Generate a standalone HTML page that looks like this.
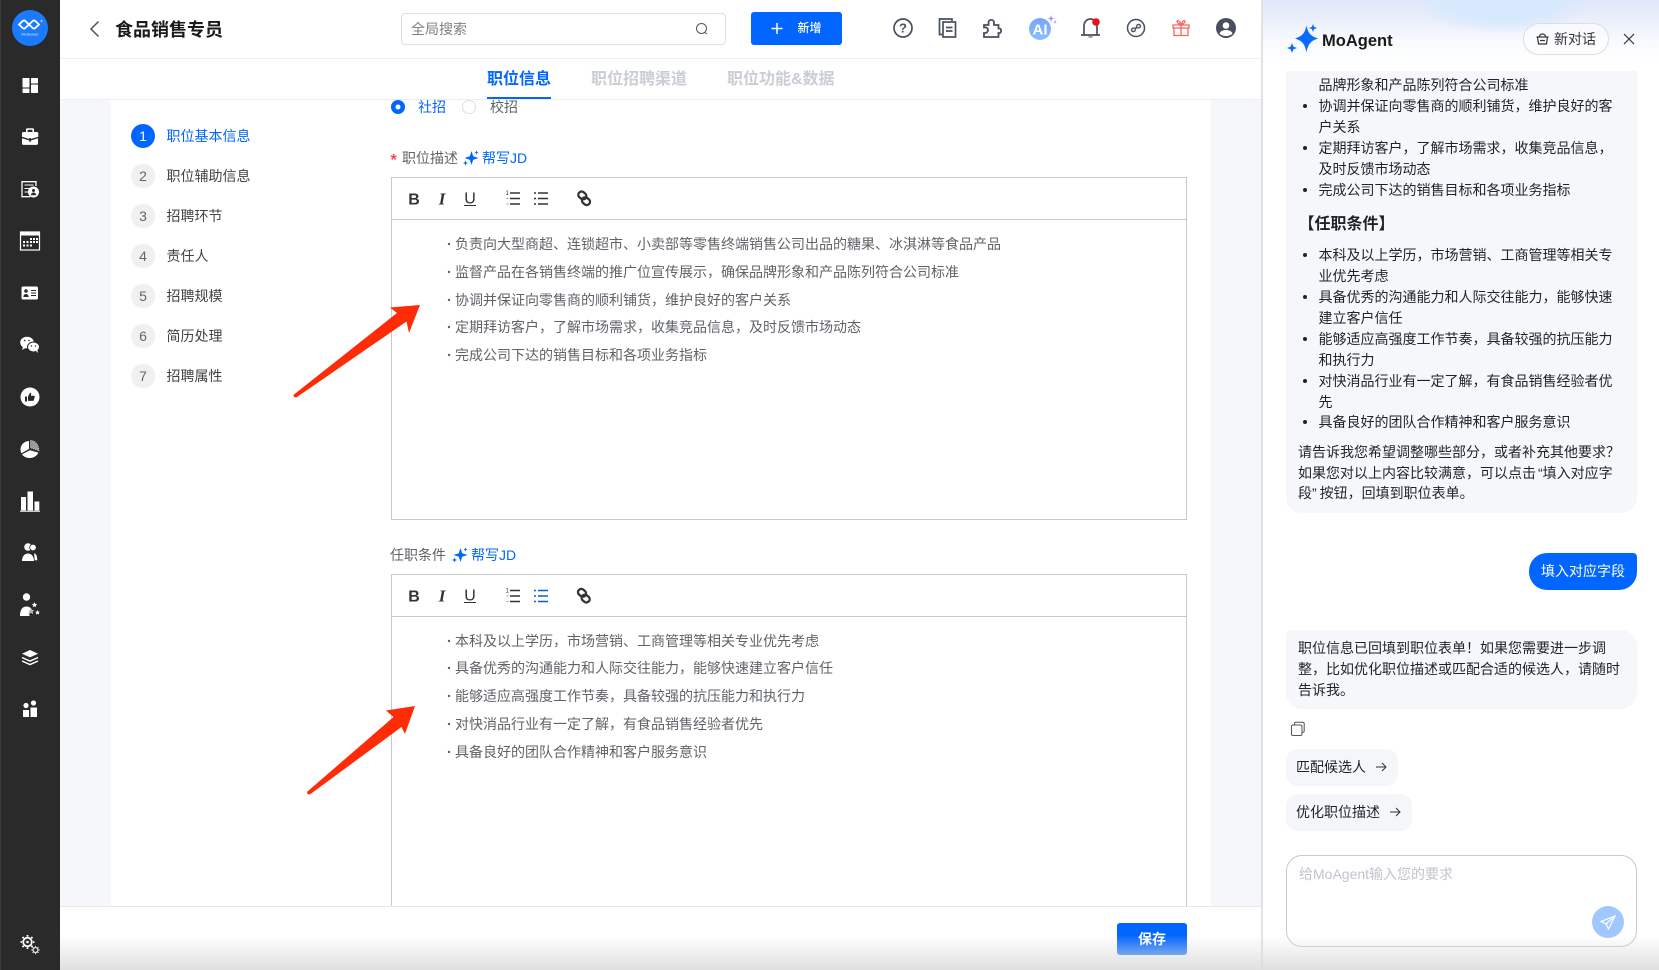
<!DOCTYPE html>
<html lang="zh"><head><meta charset="utf-8"><title>食品销售专员</title>
<style>
*{box-sizing:border-box;margin:0;padding:0}
html,body{width:1659px;height:970px;overflow:hidden;background:#fff}
body{position:relative;font-family:"Liberation Sans","Noto Sans CJK SC",sans-serif;font-size:14px;color:#1f2329}
.a{position:absolute}
.t{position:absolute;white-space:nowrap;line-height:20px;font-size:14px}
.g{color:#5f6368}
.b{color:#0066ff}
.c{position:absolute;left:131px;width:24px;height:24px;border-radius:50%;background:#f0f0f0;color:#666;text-align:center;line-height:24px;font-size:14px}
.ed{position:absolute;left:391px;width:796px;border:1px solid #c8c8c8;background:#fff}
.m{left:1318.5px}
</style></head><body>
<div class="a" style="left:0;top:0;width:60px;height:970px;background:#2a2a2a;border-left:1px solid #3a3a3a"></div>
<div class="a" style="left:60px;top:99px;width:1202px;height:807px;background:#f5f7fa"></div>
<div class="a" style="left:111px;top:99px;width:1100px;height:807px;background:#fff"></div>
<div class="a" style="left:60px;top:58px;width:1202px;height:1px;background:#eeeef5"></div>
<div class="a" style="left:60px;top:99px;width:1202px;height:1px;background:#ebedf0"></div>
<div class="a" style="left:60px;top:906px;width:1202px;height:1px;background:#e8e8e8"></div>

<div class="t" style="left:115px;top:17px;font-size:18px;line-height:26px;font-weight:700;color:#1a1a1a">食品销售专员</div>
<div class="a" style="left:401px;top:13px;width:325px;height:32px;border:1px solid #dcdfe6;border-radius:4px"></div>
<div class="t" style="left:411px;top:19px;color:#808080">全局搜索</div>
<div class="a" style="left:751px;top:12px;width:91px;height:33px;background:#0066ff;border-radius:3px"></div>
<div class="t" style="left:797.5px;top:18px;font-size:12px;color:#fff;font-weight:500">新增</div>

<div class="t b" style="left:487px;top:69px;font-size:16px;line-height:22px;font-weight:700">职位信息</div>
<div class="a" style="left:487px;top:97px;width:64px;height:2px;background:#0066ff"></div>
<div class="t" style="left:591px;top:69px;font-size:16px;line-height:22px;font-weight:700;color:#c9cdd4">职位招聘渠道</div>
<div class="t" style="left:727px;top:69px;font-size:16px;line-height:22px;font-weight:700;color:#c9cdd4">职位功能&amp;数据</div>

<div class="c" style="top:124px;background:#0066ff;color:#fff">1</div><div class="t b" style="left:166.500px;top:126px">职位基本信息</div>
<div class="c" style="top:164px">2</div><div class="t g" style="left:166.500px;top:166px;color:#444">职位辅助信息</div>
<div class="c" style="top:204px">3</div><div class="t g" style="left:166.500px;top:206px;color:#444">招聘环节</div>
<div class="c" style="top:244px">4</div><div class="t g" style="left:166.500px;top:246px;color:#444">责任人</div>
<div class="c" style="top:284px">5</div><div class="t g" style="left:166.500px;top:286px;color:#444">招聘规模</div>
<div class="c" style="top:324px">6</div><div class="t g" style="left:166.500px;top:326px;color:#444">简历处理</div>
<div class="c" style="top:364px">7</div><div class="t g" style="left:166.500px;top:366px;color:#444">招聘属性</div>

<div class="t b" style="left:418px;top:97px">社招</div>
<div class="t g" style="left:490px;top:97px">校招</div>
<div class="t" style="left:390.500px;top:151px;color:#f5484d;font-size:16px;font-weight:700">*</div>
<div class="t g" style="left:402px;top:148px">职位描述</div>
<div class="t b" style="left:482px;top:148px">帮写JD</div>
<div class="ed" style="top:177px;height:343px"></div>
<div class="a" style="left:392px;top:219px;width:794px;height:1px;background:#c8c8c8"></div>
<div class="t g" style="left:455px;top:234px">负责向大型商超、连锁超市、小卖部等零售终端销售公司出品的糖果、冰淇淋等食品产品</div>
<div class="t g" style="left:455px;top:262px">监督产品在各销售终端的推广位宣传展示，确保品牌形象和产品陈列符合公司标准</div>
<div class="t g" style="left:455px;top:290px">协调并保证向零售商的顺利铺货，维护良好的客户关系</div>
<div class="t g" style="left:455px;top:317px">定期拜访客户，了解市场需求，收集竞品信息，及时反馈市场动态</div>
<div class="t g" style="left:455px;top:345px">完成公司下达的销售目标和各项业务指标</div>

<div class="t g" style="left:390px;top:545px">任职条件</div>
<div class="t b" style="left:471px;top:545px">帮写JD</div>
<div class="ed" style="top:574px;height:332px;border-bottom:0"></div>
<div class="a" style="left:392px;top:616px;width:794px;height:1px;background:#c8c8c8"></div>
<div class="t g" style="left:455px;top:631px">本科及以上学历，市场营销、工商管理等相关专业优先考虑</div>
<div class="t g" style="left:455px;top:658px">具备优秀的沟通能力和人际交往能力，能够快速建立客户信任</div>
<div class="t g" style="left:455px;top:686px">能够适应高强度工作节奏，具备较强的抗压能力和执行力</div>
<div class="t g" style="left:455px;top:714px">对快消品行业有一定了解，有食品销售经验者优先</div>
<div class="t g" style="left:455px;top:742px">具备良好的团队合作精神和客户服务意识</div>

<div class="a" style="left:1117px;top:923px;width:70px;height:32px;background:#0066ff;border-radius:3px;color:#fff;text-align:center;line-height:32px;font-weight:700">保存</div>

<!-- panel -->
<div class="a" style="left:1261px;top:0;width:398px;height:970px;background:#fff;border-left:2px solid #e2e2e2"></div>
<div class="a" style="left:1263px;top:0;width:396px;height:70px;background:radial-gradient(ellipse 90px 34px at 240px 0,#d6e9fd 0,#d6e9fd 60%,rgba(214,233,253,0) 100%),linear-gradient(180deg,#e1e7fb 0,#ecf0fc 22px,#f8fafe 42px,#fff 66px)"></div>
<div class="t" style="left:1322px;top:30px;font-size:16.500px;line-height:22px;font-weight:700;color:#1a1a1a">MoAgent</div>
<div class="a" style="left:1523px;top:23px;width:86px;height:32px;border:1px solid #dedede;border-radius:16px;background:rgba(255,255,255,.6)"></div>
<div class="t" style="left:1554px;top:29px;color:#333">新对话</div>

<div class="a" style="left:1286px;top:71px;width:351px;height:442px;background:#f5f7fa;border-radius:0 0 16px 16px"></div>
<div class="t m" style="top:75px">品牌形象和产品陈列符合公司标准</div>
<div class="t m" style="top:96px">协调并保证向零售商的顺利铺货，维护良好的客</div>
<div class="t m" style="top:117px">户关系</div>
<div class="t m" style="top:138px">定期拜访客户，了解市场需求，收集竞品信息，</div>
<div class="t m" style="top:159px">及时反馈市场动态</div>
<div class="t m" style="top:180px">完成公司下达的销售目标和各项业务指标</div>
<div class="t" style="left:1298.500px;top:214px;font-size:16px;line-height:22px;font-weight:700">【任职条件】</div>
<div class="t m" style="top:245px">本科及以上学历，市场营销、工商管理等相关专</div>
<div class="t m" style="top:266px">业优先考虑</div>
<div class="t m" style="top:287px">具备优秀的沟通能力和人际交往能力，能够快速</div>
<div class="t m" style="top:308px">建立客户信任</div>
<div class="t m" style="top:329px">能够适应高强度工作节奏，具备较强的抗压能力</div>
<div class="t m" style="top:350px">和执行力</div>
<div class="t m" style="top:371px">对快消品行业有一定了解，有食品销售经验者优</div>
<div class="t m" style="top:392px">先</div>
<div class="t m" style="top:412px">具备良好的团队合作精神和客户服务意识</div>
<div class="t" style="left:1298px;top:442px">请告诉我您希望调整哪些部分，或者补充其他要求？</div>
<div class="t" style="left:1298px;top:463px">如果您对以上内容比较满意，可以点击<span style="margin-left:2px">“</span>填入对应字</div>
<div class="t" style="left:1298px;top:483px">段<span style="margin-right:3px">”</span>按钮，回填到职位表单。</div>

<div class="a" style="left:1529px;top:553px;width:108px;height:37px;background:#0066ff;border-radius:18px 4px 18px 18px"></div>
<div class="t" style="left:1541px;top:561px;color:#fff">填入对应字段</div>

<div class="a" style="left:1286px;top:630px;width:351px;height:79px;background:#f5f7fa;border-radius:6px 16px 16px 16px"></div>
<div class="t" style="left:1298px;top:638px">职位信息已回填到职位表单！如果您需要进一步调</div>
<div class="t" style="left:1298px;top:659px">整，比如优化职位描述或匹配合适的候选人，请随时</div>
<div class="t" style="left:1298px;top:680px">告诉我。</div>

<div class="a" style="left:1286px;top:749px;width:112px;height:37px;background:#f5f6fa;border-radius:12px"></div>
<div class="t" style="left:1296px;top:757px">匹配候选人</div>
<div class="a" style="left:1286px;top:794px;width:126px;height:37px;background:#f5f6fa;border-radius:12px"></div>
<div class="t" style="left:1296px;top:802px">优化职位描述</div>

<div class="a" style="left:1286px;top:855px;width:351px;height:92px;border:1px solid #c9c9c9;border-radius:16px;background:#fff"></div>
<div class="t" style="left:1299px;top:864px;color:#c0c4cc">给MoAgent输入您的要求</div>
<div class="a" style="left:1592px;top:906px;width:32px;height:32px;border-radius:50%;background:#a0c8ff"></div>

<!-- all icons -->
<svg class="a" style="left:0;top:0" width="1659" height="970" viewBox="0 0 1659 970" fill="none" xmlns="http://www.w3.org/2000/svg">
<!-- logo -->
<circle cx="30" cy="28" r="18" fill="#1a7bff"/>
<path d="M20 24.500l3.700-3.500c1-.9 1.700-.9 2.600 0l3.700 3.500 3.700-3.500c1-.9 1.700-.9 2.600 0L40 24.500l-3.700 3.500c-.9.900-1.600.900-2.600 0L30 24.500 26.300 28c-.9.900-1.600.900-2.600 0z" stroke="#fff" stroke-width="1.800" transform="translate(-1 0)"/>
<circle cx="41.500" cy="21" r=".9" fill="#fff"/>
<text x="30" y="35.500" text-anchor="middle" font-size="3.800" fill="#dcebff" font-family="Liberation Sans">MoSeeker</text>
<!-- dashboard -->
<g fill="#fff"><rect x="22.500" y="78" width="7" height="9.500" rx=".6"/><rect x="22.500" y="88.500" width="7" height="4.500" rx=".6"/><rect x="31" y="78" width="7" height="5.500" rx=".6"/><rect x="31" y="84.500" width="7" height="8.500" rx=".6"/></g>
<!-- briefcase -->
<path fill="#fff" d="M26 132v-2.500c0-.8.500-1.300 1.300-1.300h5.400c.8 0 1.300.5 1.300 1.300v2.500h3c.7 0 1.300.6 1.300 1.300v3.500l-7.500 2.200v-1h-1.600v1L22 136.800v-3.500c0-.7.600-1.300 1.300-1.300zm1.600 0h4.800v-2.200h-4.800zM22 138.300l7.300 2.200v1.300h1.600v-1.300l7.100-2.200v5.200c0 .8-.6 1.400-1.400 1.400H23.400c-.8 0-1.400-.6-1.400-1.400z"/>
<!-- doc person -->
<path stroke="#fff" stroke-width="1.300" d="M36 186v-4.300H22v15h8"/><path stroke="#fff" stroke-width="1.100" d="M24.500 185h9M24.500 188.500h5M24.500 192h3.500"/><circle cx="33.500" cy="192" r="5.500" fill="#fff"/><circle cx="33.500" cy="190.500" r="1.500" fill="#2a2a2a"/><path d="M30.800 195.300c.3-2 1.500-2.800 2.700-2.800s2.400.8 2.700 2.800z" fill="#2a2a2a"/>
<!-- calendar -->
<rect x="20.500" y="232" width="19" height="18" stroke="#fff" stroke-width="1.200"/><rect x="20.500" y="232" width="19" height="3.500" fill="#fff"/>
<g fill="#fff"><path d="M30 238h2v2h-2zM33 238h2v2h-2zM36 238h2v2h-2zM23 241h2v2h-2zM26.500 241h2v2h-2zM30 241h2v2h-2zM33 241h2v2h-2zM36 241h2v2h-2zM23 244.500h2v2h-2zM26.500 244.500h2v2h-2zM30 244.500h2v2h-2z"/></g>
<!-- contact -->
<rect x="21.500" y="286.500" width="16.500" height="13" rx="1.500" fill="#fff"/><circle cx="26" cy="291" r="1.800" fill="#2a2a2a"/><path d="M23.300 297c.2-2 1.300-3 2.700-3s2.500 1 2.700 3z" fill="#2a2a2a"/><path d="M31 290.500h5M31 293h5M31 295.500h5" stroke="#2a2a2a" stroke-width="1"/>
<!-- wechat -->
<ellipse cx="27" cy="342.500" rx="6.800" ry="5.800" fill="#fff"/><path d="M23 347l-1 3 3.500-2z" fill="#fff"/><ellipse cx="33.500" cy="347" rx="6" ry="5" fill="#fff" stroke="#2a2a2a" stroke-width="1"/><path d="M36 351l2 2-.5-3z" fill="#fff"/><g fill="#2a2a2a"><circle cx="24.700" cy="340.500" r=".8"/><circle cx="29" cy="340.500" r=".8"/><circle cx="31.500" cy="346" r=".7"/><circle cx="35.500" cy="346" r=".7"/></g>
<!-- thumb -->
<circle cx="30" cy="397" r="9.500" fill="#fff"/><path fill="#2a2a2a" d="M25 396.500h2v5h-2zM28 396.500l2-3.800c.9 0 1.400.7 1.200 1.700l-.3 1.300h3c.7 0 1.100.6.900 1.200l-1 3.200c-.1.500-.5.800-1 .8H28z"/>
<!-- pie -->
<path fill="#fff" d="M29 441c-5 .2-8.500 3.900-8.500 8.500 0 1.400.3 2.600.9 3.800L29 449zM30 450.200l-8 4c1.700 2.700 4.900 3.800 7.900 3.800 3.800 0 7-2.200 8.500-5.400z"/><path fill="#9a9a9a" stroke="#fff" stroke-width=".6" stroke-dasharray="1 1" d="M30.500 440.500c4.400.1 8.200 3.600 8.500 10.300l-8.500-3z"/>
<!-- bars -->
<path fill="#fff" d="M21 497h5v13.500h-5zM27.500 491.500h5.500v19h-5.500zM34.500 501.500h4.800v9h-4.800zM20 510.800h20v1H20z"/>
<!-- people -->
<g transform="translate(0 4)"><circle cx="28" cy="543" r="3.800" fill="#fff"/><path fill="#fff" d="M22 557c0-5 3-7.500 6-7.500s6 2.500 6 7.500z"/><circle cx="33" cy="543.500" r="3.300" fill="#fff" stroke="#2a2a2a" stroke-width=".8"/><path d="M34 549c3 .5 3.600 4 3.600 7.500h-2.800" fill="#fff" stroke="#2a2a2a" stroke-width=".6"/></g>
<!-- person stars -->
<g transform="translate(0 2)"><circle cx="26.500" cy="595" r="3.700" fill="#fff"/><path fill="#fff" d="M20 614c0-7 3-9.500 6.500-9.500 2 0 3.600.7 4.700 2.200l-2.500 4.300 1 3z"/><path fill="#fff" d="M34.500 600l.8 1.900 2 .1-1.500 1.300.5 2-1.800-1.100-1.800 1.100.5-2-1.500-1.300 2-.1zM37.500 608l.7 1.600 1.800.1-1.300 1.100.4 1.800-1.600-.9-1.600.9.4-1.800-1.300-1.100 1.800-.1z"/><path d="M31 606.500l.8 1.800 2 .1-1.500 1.300.5 2-1.800-1.100-1.800 1.100.5-2-1.500-1.300 2-.1z" fill="#aaa" stroke="#fff" stroke-width=".4"/></g>
<!-- layers -->
<path fill="#fff" d="M30 650l8 3.700-8 3.700-8-3.700z"/><path d="M22 657.500l8 3.600 8-3.600M22 661l8 3.600 8-3.600" stroke="#fff" stroke-width="1.500"/>
<!-- couple -->
<g transform="translate(0 1)"><circle cx="26" cy="704.500" r="2.600" fill="#fff"/><circle cx="33.500" cy="702" r="2.600" fill="#fff"/><path fill="#fff" d="M23 709h6v7h-6zM30.500 706.500h6.500v9.500h-6.500z"/></g>
<!-- gear -->
<g transform="translate(27.500 942)"><circle r="4.300" stroke="#fff" stroke-width="1.800"/><circle r="1.300" fill="#fff"/><path stroke="#fff" stroke-width="1.800" d="M0-7v1.500M0 5.500V7M-7 0h1.500M5.500 0H7M-5-5l1.200 1.200M3.800 3.800L5 5M5-5L3.800-3.800M-3.800 3.800L-5 5"/></g>
<g transform="translate(35.500 950)"><circle r="2.500" stroke="#ddd" stroke-width="1.300"/><path stroke="#ddd" stroke-width="1" d="M0-4.300V-3M0 3v1.300M-4.300 0H-3M3 0h1.300M-3-3l1 1M2 2l1 1M3-3L2-2M-2 2l-1 1"/></g>

<!-- back -->
<path d="M98.500 21.500L91 29l7.500 7.500" stroke="#4a5160" stroke-width="1.500"/>
<!-- search icon -->
<circle cx="701.500" cy="28.500" r="5" stroke="#555" stroke-width="1"/><path d="M705 32.500l2 1.500" stroke="#555"/>
<!-- plus -->
<path d="M777 23v11M771.500 28.500h11" stroke="#fff" stroke-width="1.500"/>

<!-- top icons -->
<circle cx="903" cy="28" r="9" stroke="#484f5e" stroke-width="1.700"/>
<text x="903" y="32.500" text-anchor="middle" font-size="13" font-weight="700" fill="#484f5e" font-family="Liberation Sans">?</text>
<path d="M942 34.500h-2.500V19h12.500v2" stroke="#484f5e" stroke-width="1.700"/><rect x="943" y="22" width="12.500" height="15" fill="#fff" stroke="#484f5e" stroke-width="1.700"/><path d="M946 27.500h6.500M946 31h6.500" stroke="#484f5e" stroke-width="1.700"/>
<path d="M984 25h4.500v-2.500c0-3.500 5.500-3.500 5.500 0V25h4.500v3.500c3.500-1 3.500 5.500 0 4.500v4H984v-4c3 .5 4-1.800 4-3s-1-3-4-2.500z" stroke="#484f5e" stroke-width="1.800"/>
<defs><linearGradient id="ai" x1="0" y1="0" x2="0" y2="1"><stop offset="0" stop-color="#7aa3fa"/><stop offset="1" stop-color="#86c0ff"/></linearGradient></defs>
<circle cx="1040" cy="29" r="11" fill="url(#ai)"/>
<text x="1040" y="34.500" text-anchor="middle" font-size="15" font-weight="700" fill="#fff" font-family="Liberation Sans">AI</text>
<path d="M1051 15l.9 2.600 2.600.9-2.600.9-.9 2.600-.9-2.600-2.600-.9 2.600-.9zM1055 20l.5 1.500 1.500.5-1.500.5-.5 1.500-.5-1.500-1.500-.5 1.500-.5z" fill="#9a9cf5"/>
<g transform="translate(-1 0)"><path d="M1085 34.500V26c0-4 2.800-7 6.500-7s6.500 3 6.500 7v8.500M1082 35h19" stroke="#484f5e" stroke-width="1.700"/><path d="M1089 36.500c.5 1.500 4.500 1.500 5 0z" fill="#484f5e"/><circle cx="1097" cy="22" r="3.800" fill="#e60f1e"/></g>
<circle cx="1136" cy="28" r="8.500" stroke="#484f5e" stroke-width="1.500"/><path d="M1137 25.500c.6-1.700 4-1.200 3.400 1-.4 1.500-2.200 1.800-3.300 1M1135 30.500c-.6 1.700-4 1.200-3.400-1 .4-1.500 2.200-1.800 3.300-1M1137 25.500l-2 5" stroke="#484f5e" stroke-width="1.400"/>
<path d="M1174 28h14v7.500h-14zM1173 25h16v3h-16zM1181 25v10.500M1181 25c-2-1-4-2-4-3.500s2.600-1.800 4 3.500c1.400-5.300 4-5 4-3.500s-2 2.500-4 3.500" stroke="#f76560" stroke-width="1.300"/>
<circle cx="1226" cy="28" r="10" fill="#484f5e"/><circle cx="1226" cy="25.500" r="3.300" fill="#fff"/><path d="M1219.500 33.500c1-2.500 3.500-3.500 6.500-3.500s5.500 1 6.500 3.500c-1.500 1.800-4 2.500-6.500 2.500s-5-.7-6.500-2.500z" fill="#fff"/>

<!-- radios -->
<circle cx="398" cy="107" r="7" fill="#0066ff"/><circle cx="398" cy="107" r="2.500" fill="#fff"/>
<circle cx="469" cy="107" r="6.500" fill="#fff" stroke="#dcdfe6"/>

<!-- sparkle JD -->
<g fill="#0066ff"><path d="M471.500 152l1.700 5.300 5.300 1.700-5.300 1.700-1.700 5.300-1.700-5.300-5.300-1.700 5.300-1.700z" transform="translate(0 -1)"/><path d="M476.500 150.500l.6 1.400 1.400.6-1.400.6-.6 1.400-.6-1.400-1.400-.6 1.400-.6zM465.500 160.500l.7 1.800 1.800.7-1.800.7-.7 1.800-.7-1.800-1.800-.7 1.800-.7z"/></g>
<g transform="translate(-11 397)" fill="#0066ff"><path d="M471.500 152l1.700 5.300 5.300 1.700-5.300 1.700-1.700 5.300-1.700-5.300-5.300-1.700 5.300-1.700z" transform="translate(0 -1)"/><path d="M476.500 150.500l.6 1.400 1.400.6-1.400.6-.6 1.400-.6-1.400-1.400-.6 1.400-.6zM465.500 160.500l.7 1.800 1.800.7-1.800.7-.7 1.800-.7-1.800-1.800-.7 1.800-.7z"/></g>

<!-- toolbars -->
<g font-family="Liberation Sans" fill="#333">
<text x="414" y="204.500" text-anchor="middle" font-size="16" font-weight="700">B</text>
<text x="442" y="204.500" text-anchor="middle" font-size="17" font-family="Liberation Serif" font-style="italic" font-weight="700">I</text>
<text x="470" y="203.500" text-anchor="middle" font-size="16">U</text>
<text x="414" y="601.500" text-anchor="middle" font-size="16" font-weight="700">B</text>
<text x="442" y="601.500" text-anchor="middle" font-size="17" font-family="Liberation Serif" font-style="italic" font-weight="700">I</text>
<text x="470" y="600.500" text-anchor="middle" font-size="16">U</text>
<text x="505.500" y="195" font-size="6">1</text>
<text x="505.500" y="592.500" font-size="6">1</text>
</g>
<path d="M464 205.500h12M464 602.500h12" stroke="#333" stroke-width="1"/>
<g stroke="#333" stroke-width="1.600"><path d="M510 193h10M510 198.500h10M510 204h10M510 590.500h10M510 596h10M510 601.500h10M538 193h10M538 198.500h10M538 204h10M534 193h2M534 198.500h2M534 204h2"/></g>
<g stroke="#999" stroke-width="1"><path d="M506.500 198.500h2M506.500 204h2M506.500 596h2M506.500 601.500h2"/></g>
<g stroke="#0a5fd0" stroke-width="1.600"><path d="M538 590.500h10M538 596h10M538 601.500h10M534 590.500h2M534 596h2M534 601.500h2"/></g>
<g stroke="#333" stroke-width="2.300" fill="none" transform="translate(0 .5)"><rect x="578" y="191.500" width="8.500" height="6.500" rx="3.200" transform="rotate(40 582 195)"/><rect x="581.500" y="197.500" width="8.500" height="6.500" rx="3.200" transform="rotate(40 586 201)"/><rect x="578" y="589" width="8.500" height="6.500" rx="3.200" transform="rotate(40 582 592)"/><rect x="581.500" y="595" width="8.500" height="6.500" rx="3.200" transform="rotate(40 586 598)"/></g>

<!-- editor bullets -->
<g fill="#606266"><circle cx="449" cy="244" r="1.200"/><circle cx="449" cy="272" r="1.200"/><circle cx="449" cy="300" r="1.200"/><circle cx="449" cy="327" r="1.200"/><circle cx="449" cy="355" r="1.200"/><circle cx="449" cy="641" r="1.200"/><circle cx="449" cy="668" r="1.200"/><circle cx="449" cy="696" r="1.200"/><circle cx="449" cy="724" r="1.200"/><circle cx="449" cy="752" r="1.200"/></g>
<!-- red arrows -->
<path fill="#fd2b06" d="M420 305L390 307.500 397 313 294 394.500c-1.500 1.500 1 4 3 2.500L406.500 321.500 409 333z"/>
<path fill="#fd2b06" d="M415 706L386 710.500 393.500 717 307.500 791.500c-1.500 1.500 1 4 3 2.500L401.500 727 405 734z"/>

<!-- MoAgent logo -->
<path fill="#0a6cff" d="M1306.500 25.500c1.600 7.500 4 10.500 11.500 13-7.500 2.500-9.900 5.500-11.500 14-1.600-8.500-4-11.500-11.500-14 7.500-2.500 9.900-5.500 11.500-13z"/>
<path fill="#0a6cff" d="M1313 24l1.100 2.900 2.900 1.100-2.900 1.100-1.100 2.900-1.100-2.900-2.900-1.100 2.900-1.100zM1292 43l1.400 3.600 3.600 1.400-3.600 1.400-1.400 3.600-1.400-3.600-3.600-1.400 3.600-1.400z"/>
<!-- new chat -->
<path d="M1537.500 37h10l-1 7h-8zM1536.500 37h12M1539.500 37c0-4 6-4 6 0M1540 40.500h5" stroke="#333" stroke-width="1.200"/>
<path d="M1624 34l10 10M1634 34l-10 10" stroke="#333" stroke-width="1.200"/>
<!-- msg bullets -->
<g fill="#1f2329"><circle cx="1305" cy="106" r="2"/><circle cx="1305" cy="148" r="2"/><circle cx="1305" cy="190" r="2"/><circle cx="1305" cy="255" r="2"/><circle cx="1305" cy="297" r="2"/><circle cx="1305" cy="339" r="2"/><circle cx="1305" cy="381" r="2"/><circle cx="1305" cy="422" r="2"/></g>
<!-- copy -->
<rect x="1291.500" y="725" width="10.500" height="10.500" rx="1.500" stroke="#555" stroke-width="1"/><path d="M1294.500 725v-1.500c0-.8.600-1.300 1.300-1.300h7c.9 0 1.400.5 1.400 1.300v7.500c0 .8-.5 1.300-1.300 1.300H1302" stroke="#555"/>
<!-- chip arrows -->
<path d="M1376 767h10M1382 763l4 4-4 4M1390 812h10M1396 808l4 4-4 4" stroke="#333" stroke-width="1"/>
<!-- send -->
<path d="M1615 916l-14 5.500 5 2.500 2.500 5zM1606 924l9-8" stroke="#fff" stroke-width="1.200" fill="none"/>
</svg>
<!-- bottom window shade -->
<div class="a" style="left:60px;top:935px;width:1599px;height:35px;background:linear-gradient(180deg,rgba(222,222,222,0),rgba(222,222,222,.95));pointer-events:none"></div>
</body></html>
